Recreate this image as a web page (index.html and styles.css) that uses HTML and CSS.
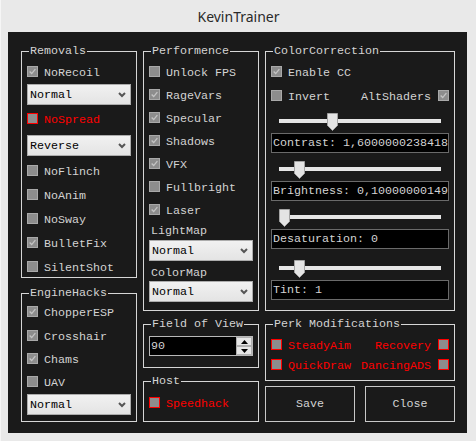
FILE: index.html
```html
<!DOCTYPE html>
<html>
<head>
<meta charset="utf-8">
<title>KevinTrainer</title>
<link rel="stylesheet" href="styles.css">
</head>
<body>
<div class="window">
  <div class="titlebar">KevinTrainer</div>
  <div class="panel">

    <div class="col">
      <div class="group removals">
        <span class="legend">Removals</span>
        <div class="check on"><span class="box"><svg viewBox="0 0 11 11"><path d="M2 5.5 L4.5 8 L9 2.5" /></svg></span>NoRecoil</div>
        <div class="combo m3"><span>Normal</span><svg class="chev" viewBox="0 0 8 6"><path d="M1 1 L4 4 L7 1"/></svg></div>
        <div class="check red m7"><span class="box"></span>NoSpread</div>
        <div class="combo m7"><span>Reverse</span><svg class="chev" viewBox="0 0 8 6"><path d="M1 1 L4 4 L7 1"/></svg></div>
        <div class="check m8"><span class="box"></span>NoFlinch</div>
        <div class="check m8"><span class="box"></span>NoAnim</div>
        <div class="check m8"><span class="box"></span>NoSway</div>
        <div class="check on m8"><span class="box"><svg viewBox="0 0 11 11"><path d="M2 5.5 L4.5 8 L9 2.5" /></svg></span>BulletFix</div>
        <div class="check m8"><span class="box"></span>SilentShot</div>
      </div>
      <div class="group engine">
        <span class="legend">EngineHacks</span>
        <div class="check on"><span class="box"><svg viewBox="0 0 11 11"><path d="M2 5.5 L4.5 8 L9 2.5" /></svg></span>ChopperESP</div>
        <div class="check on m8"><span class="box"><svg viewBox="0 0 11 11"><path d="M2 5.5 L4.5 8 L9 2.5" /></svg></span>Crosshair</div>
        <div class="check on m7"><span class="box"><svg viewBox="0 0 11 11"><path d="M2 5.5 L4.5 8 L9 2.5" /></svg></span>Chams</div>
        <div class="check m7"><span class="box"></span>UAV</div>
        <div class="combo m3"><span>Normal</span><svg class="chev" viewBox="0 0 8 6"><path d="M1 1 L4 4 L7 1"/></svg></div>
      </div>
    </div>

    <div class="col">
      <div class="group perf">
        <span class="legend">Performence</span>
        <div class="check"><span class="box"></span>Unlock FPS</div>
        <div class="check on m7"><span class="box"><svg viewBox="0 0 11 11"><path d="M2 5.5 L4.5 8 L9 2.5" /></svg></span>RageVars</div>
        <div class="check on m7"><span class="box"><svg viewBox="0 0 11 11"><path d="M2 5.5 L4.5 8 L9 2.5" /></svg></span>Specular</div>
        <div class="check on m7"><span class="box"><svg viewBox="0 0 11 11"><path d="M2 5.5 L4.5 8 L9 2.5" /></svg></span>Shadows</div>
        <div class="check on m7"><span class="box"><svg viewBox="0 0 11 11"><path d="M2 5.5 L4.5 8 L9 2.5" /></svg></span>VFX</div>
        <div class="check m7"><span class="box"></span>Fullbright</div>
        <div class="check on m7"><span class="box"><svg viewBox="0 0 11 11"><path d="M2 5.5 L4.5 8 L9 2.5" /></svg></span>Laser</div>
        <div class="label m4">LightMap</div>
        <div class="combo m1"><span>Normal</span><svg class="chev" viewBox="0 0 8 6"><path d="M1 1 L4 4 L7 1"/></svg></div>
        <div class="label m4">ColorMap</div>
        <div class="combo"><span>Normal</span><svg class="chev" viewBox="0 0 8 6"><path d="M1 1 L4 4 L7 1"/></svg></div>
      </div>
      <div class="group fov">
        <span class="legend">Field of View</span>
        <div class="numeric">
          <span class="num-value">90</span>
          <div class="spin">
            <span class="spin-btn"><svg viewBox="0 0 7 4"><path d="M0 4 L3.5 0 L7 4Z"/></svg></span>
            <span class="spin-btn"><svg viewBox="0 0 7 4"><path d="M0 0 L3.5 4 L7 0Z"/></svg></span>
          </div>
        </div>
      </div>
      <div class="group host">
        <span class="legend">Host</span>
        <div class="check red"><span class="box"></span>Speedhack</div>
      </div>
    </div>

    <div class="col">
      <div class="group cc">
        <span class="legend">ColorCorrection</span>
        <div class="check on"><span class="box"><svg viewBox="0 0 11 11"><path d="M2 5.5 L4.5 8 L9 2.5" /></svg></span>Enable CC</div>
        <div class="pair m8">
          <div class="check"><span class="box"></span>Invert</div>
          <div class="check on right">AltShaders<span class="box"><svg viewBox="0 0 11 11"><path d="M2 5.5 L4.5 8 L9 2.5" /></svg></span></div>
        </div>
        <div class="slider"><span class="track"></span><svg class="thumb" style="left:56px" viewBox="0 0 11 18"><path d="M0.5 0.5 H10.5 V12.5 L5.5 17.5 L0.5 12.5 Z"/></svg></div>
        <div class="textbox">Contrast: 1,6000000238418</div>
        <div class="slider"><span class="track"></span><svg class="thumb" style="left:23px" viewBox="0 0 11 18"><path d="M0.5 0.5 H10.5 V12.5 L5.5 17.5 L0.5 12.5 Z"/></svg></div>
        <div class="textbox">Brightness: 0,10000000149</div>
        <div class="slider"><span class="track"></span><svg class="thumb" style="left:8px" viewBox="0 0 11 18"><path d="M0.5 0.5 H10.5 V12.5 L5.5 17.5 L0.5 12.5 Z"/></svg></div>
        <div class="textbox">Desaturation: 0</div>
        <div class="slider m3"><span class="track"></span><svg class="thumb" style="left:23px" viewBox="0 0 11 18"><path d="M0.5 0.5 H10.5 V12.5 L5.5 17.5 L0.5 12.5 Z"/></svg></div>
        <div class="textbox">Tint: 1</div>
      </div>
      <div class="group perk">
        <span class="legend">Perk Modifications</span>
        <div class="pair">
          <div class="check red"><span class="box"></span>SteadyAim</div>
          <div class="check red right">Recovery<span class="box"></span></div>
        </div>
        <div class="pair m4">
          <div class="check red"><span class="box"></span>QuickDraw</div>
          <div class="check red right">DancingADS<span class="box"></span></div>
        </div>
      </div>
      <div class="buttons">
        <button class="btn">Save</button>
        <button class="btn">Close</button>
      </div>
    </div>

  </div>
</div>
</body>
</html>
```

FILE: styles.css
```css
* { box-sizing: border-box; }

html, body {
  margin: 0;
  padding: 0;
  background: #e9e9e9;
}

body {
  font-family: "Liberation Mono", "Courier New", monospace;
  font-size: 11.67px;
  line-height: 16px;
  color: #d3d3d3;
}

.window {
  width: 476px;
  height: 441px;
  border-left: 1px solid #f6f6f6;
  background: #e9e9e9;
}

.titlebar {
  height: 32px;
  padding-top: 1px;
  display: flex;
  align-items: center;
  justify-content: center;
  font-family: "Segoe UI", "Noto Sans", "Open Sans", sans-serif;
  font-size: 14px;
  color: #2a2a2a;
}

.panel {
  margin-left: 7px;
  width: 459px;
  height: 401px;
  background: #1a1a1a;
  padding: 19px 12px 11px 13px;
  display: grid;
  grid-template-columns: 116px 116px 190px;
  column-gap: 6px;
  align-items: start;
}

.col {
  display: flex;
  flex-direction: column;
}

.group {
  position: relative;
  border: 1px solid #d6d6d6;
  display: flex;
  flex-direction: column;
  padding: 13px 5px 0 5px;
}

.legend {
  position: absolute;
  top: -9px;
  left: 7px;
  padding: 0 1px;
  background: #1a1a1a;
  white-space: nowrap;
}

.removals { height: 227px; }
.engine { height: 129px; margin-top: 15px; padding-top: 11px; }
.perf { height: 260px; }
.fov { height: 44px; margin-top: 13px; padding-top: 11px; }
.host { height: 41px; margin-top: 13px; padding-top: 14px; }
.cc { height: 260px; }
.perk { height: 57px; margin-top: 13px; }

.m1 { margin-top: 1px; }
.m3 { margin-top: 3px; }
.m4 { margin-top: 4px; }
.m7 { margin-top: 7px; }
.m8 { margin-top: 8px; }

.check {
  display: flex;
  align-items: flex-start;
  height: 16px;
  white-space: nowrap;
}

.check .box {
  width: 11px;
  height: 11px;
  margin-top: 1px;
  margin-right: 6px;
  flex: none;
  background: #8d8d8d;
  border: 1px solid #a9a9a9;
  display: block;
}

.check.right .box {
  margin-right: 0;
  margin-left: 7px;
}

.check .box svg {
  display: block;
  width: 9px;
  height: 9px;
}

.check .box svg path {
  fill: none;
  stroke: #c4c4c4;
  stroke-width: 1.6;
}

.check.red {
  color: #ff0000;
}

.check.red .box {
  border-color: #ff0000;
}

.pair {
  display: flex;
  justify-content: space-between;
  height: 16px;
}

.label {
  height: 16px;
  padding-left: 2px;
}

.combo {
  height: 21px;
  border: 1px solid #acacac;
  background: linear-gradient(#f1f1f1, #e4e4e4);
  color: #000;
  display: flex;
  align-items: center;
  justify-content: space-between;
  padding: 0 4px 0 2px;
  flex: none;
}

.combo .chev {
  width: 8px;
  height: 6px;
  margin-top: 1px;
}

.combo .chev path {
  fill: none;
  stroke: #555;
  stroke-width: 2;
}

.numeric {
  height: 20px;
  border: 1px solid #b8b8b8;
  background: #000;
  display: flex;
  justify-content: space-between;
}

.num-value {
  padding-left: 1px;
  line-height: 18px;
}

.spin {
  width: 16px;
  display: flex;
  flex-direction: column;
}

.spin-btn {
  flex: 1;
  background: #e6e6e6;
  border: 1px solid #b0b0b0;
  display: flex;
  align-items: center;
  justify-content: center;
}

.spin-btn svg {
  width: 7px;
  height: 4px;
}

.spin-btn svg path {
  fill: #000;
}

.slider {
  position: relative;
  height: 28px;
  flex: none;
}

.track {
  position: absolute;
  left: 8px;
  right: 8px;
  top: 14px;
  height: 4px;
  background: #e6e6e6;
}

.thumb {
  position: absolute;
  top: 8px;
  width: 11px;
  height: 18px;
}

.thumb path {
  fill: #e4e4e4;
  stroke: #a3a3a3;
  stroke-width: 1;
}

.textbox {
  height: 20px;
  background: #000;
  border: 1px solid #6a6a6a;
  padding-left: 1px;
  line-height: 18px;
  white-space: nowrap;
  overflow: hidden;
  flex: none;
}

.buttons {
  margin-top: 5px;
  display: flex;
  justify-content: space-between;
}

.btn {
  width: 90px;
  height: 36px;
  background: #1a1a1a;
  border: 1px solid #c8c8c8;
  color: #d3d3d3;
  font-family: "Liberation Mono", "Courier New", monospace;
  font-size: 11.67px;
  padding: 0;
}
```
